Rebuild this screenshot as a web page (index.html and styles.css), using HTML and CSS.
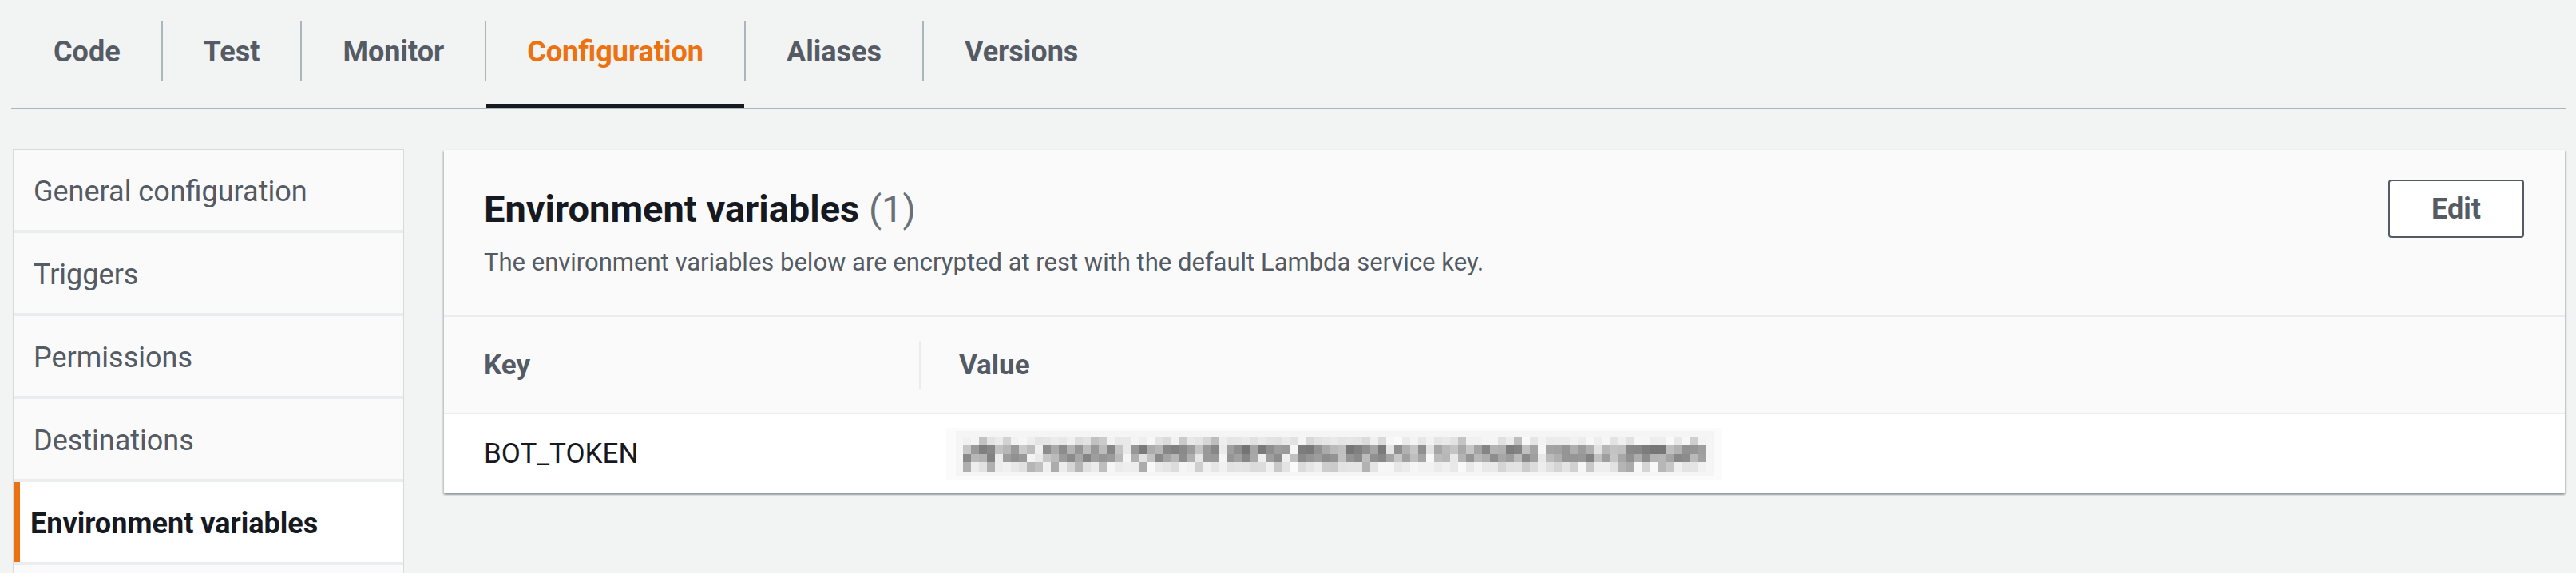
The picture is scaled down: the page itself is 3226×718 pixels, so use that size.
FILE: index.html
```html
<!DOCTYPE html>
<html lang="en">
<head>
<meta charset="utf-8">
<title>Lambda – Configuration</title>
<link rel="stylesheet" href="styles.css">
</head>
<body>
<div class="page">
  <nav class="tabs">
    <a class="tab">Code</a><span class="sep"></span>
    <a class="tab">Test</a><span class="sep"></span>
    <a class="tab">Monitor</a><span class="sep"></span>
    <a class="tab active">Configuration</a><span class="sep"></span>
    <a class="tab">Aliases</a><span class="sep"></span>
    <a class="tab">Versions</a>
  </nav>

  <div class="content">
    <aside class="sidenav">
      <a class="nav-item">General configuration</a>
      <a class="nav-item">Triggers</a>
      <a class="nav-item">Permissions</a>
      <a class="nav-item">Destinations</a>
      <a class="nav-item active">Environment variables</a>
      <div class="nav-item nav-more" aria-hidden="true"></div>
    </aside>

    <section class="panel">
      <header class="panel-header">
        <div class="heading">
          <h2 class="title">Environment variables <span class="count">(1)</span></h2>
          <p class="desc">The environment variables below are encrypted at rest with the default Lambda service key.</p>
        </div>
        <button class="btn">Edit</button>
      </header>
      <div class="table">
        <div class="th th-key">Key</div>
        <div class="th th-value"><span class="col-sep"></span>Value</div>
        <div class="td td-key">BOT_TOKEN</div>
        <div class="td td-value"><canvas class="redacted" width="971" height="65"></canvas></div>
      </div>
    </section>
  </div>
</div>
<script src="script.js"></script>
</body>
</html>
```
FILE: styles.css
```css
html, body {
  margin: 0;
  padding: 0;
  background: #f2f3f3;
}
body {
  font-family: "Roboto", "Noto Sans", sans-serif;
  color: #16191f;
  overflow: hidden;
}
.page {
  width: 3226px;
  height: 718px;
  overflow: hidden;
}

/* Tabs */
.tabs {
  display: flex;
  align-items: flex-start;
  margin: 0 12px 0 14px;
  padding-left: 2px;
  border-bottom: 2px solid #aab7b8;
}
.tab {
  display: flex;
  align-items: center;
  box-sizing: border-box;
  height: 135px;
  padding: 0 51px 1px;
  border-bottom: 5px solid transparent;
  font-size: 36px;
  font-weight: 700;
  color: #545b64;
  white-space: nowrap;
}
.tab.active {
  color: #ec7211;
  border-bottom-color: #16191f;
}
.sep {
  flex: 0 0 2px;
  height: 75px;
  margin-top: 26px;
  background: #aab7b8;
}

/* Content */
.content {
  display: flex;
  align-items: flex-start;
  gap: 50px;
  padding: 50px 14px 0 16px;
}

.sidenav {
  flex: 0 0 490px;
  box-sizing: border-box;
  display: flex;
  flex-direction: column;
  gap: 4px;
  background: #eaeded;
  border: 1px solid #d5dbdb;
  border-bottom: 0;
}
.nav-item {
  display: flex;
  align-items: center;
  box-sizing: border-box;
  height: 100px;
  padding: 3px 0 0 25px;
  background: #fafafa;
  font-size: 36px;
  color: #545b64;
  white-space: nowrap;
}
.nav-item.active {
  background: #ffffff;
  border-left: 8px solid #ec7211;
  padding-left: 13px;
  font-weight: 700;
  color: #16191f;
}

/* Panel */
.panel {
  flex: 1;
  margin-top: 1px;
  background: #ffffff;
  box-shadow: 0 2px 2px 0 rgba(0, 28, 36, 0.3), 2px 1px 2px 0 rgba(0, 28, 36, 0.12), -2px 1px 2px 0 rgba(0, 28, 36, 0.12);
}
.panel-header {
  display: flex;
  justify-content: space-between;
  align-items: flex-start;
  padding: 37px 51px 46px 50px;
  background: #fafafa;
  border-bottom: 2px solid #eaeded;
}
.title {
  margin: 0;
  font-size: 47px;
  line-height: 74px;
  font-weight: 700;
  color: #16191f;
  white-space: nowrap;
}
.count {
  font-weight: 400;
  color: #687078;
}
.desc {
  margin: 10px 0 0;
  font-size: 31px;
  line-height: 40px;
  color: #545b64;
}
.btn {
  box-sizing: border-box;
  width: 170px;
  height: 73px;
  margin: 0;
  padding: 0;
  background: #ffffff;
  border: 2px solid #545b64;
  border-radius: 4px;
  font-family: inherit;
  font-size: 36px;
  font-weight: 700;
  color: #545b64;
}

/* Table */
.table {
  display: grid;
  grid-template-columns: 595px 1fr;
}
.th {
  display: flex;
  align-items: center;
  height: 120px;
  background: #fafafa;
  border-bottom: 2px solid #eaeded;
  font-size: 35px;
  font-weight: 700;
  color: #545b64;
}
.th-key {
  padding-left: 50px;
}
.col-sep {
  width: 2px;
  height: 60px;
  margin-right: 48px;
  background: #eaeded;
}
.td {
  display: flex;
  align-items: center;
  height: 99px;
  background: #ffffff;
  font-size: 35px;
  color: #16191f;
}
.td-key {
  padding-left: 50px;
}
.td-value {
  padding-left: 34px;
}
.redacted {
  display: block;
  width: 971px;
  height: 65px;
}
```
FILE: script.js
```js
(function () {
  var c = document.querySelector('.redacted');
  var ctx = c.getContext('2d');
  ctx.fillStyle = '#fbfbfb';
  ctx.fillRect(0, 0, 971, 65);
  ctx.fillStyle = '#f5f5f5';
  ctx.fillRect(12, 4, 950, 57);
  var seed = 98765;
  function rnd() {
    seed = (seed * 1103515245 + 12345) % 2147483648;
    return seed / 2147483648;
  }
  function grey(v) {
    var g = Math.round(v * 255);
    return 'rgb(' + g + ',' + g + ',' + g + ')';
  }
  var cols = 93;
  var ink = [];
  for (var i = 0; i < cols; i++) {
    ink.push(rnd() < 0.94);
  }
  var rows = [
    { y: 11, h: 11, dark: 0.3, lo: 0.7, hi: 0.95 },
    { y: 22, h: 11, dark: 0.95, lo: 0.45, hi: 0.8 },
    { y: 33, h: 10, dark: 0.9, lo: 0.5, hi: 0.78 },
    { y: 43, h: 12, dark: 0.3, lo: 0.66, hi: 0.92 }
  ];
  rows.forEach(function (r) {
    for (var i = 0; i < cols; i++) {
      var v;
      if (ink[i] && rnd() < r.dark) {
        v = r.lo + (r.hi - r.lo) * rnd();
      } else {
        v = 0.88 + 0.1 * rnd();
      }
      ctx.fillStyle = grey(v);
      ctx.fillRect(21 + i * 10, r.y, 10, r.h);
    }
  });
})();
```
